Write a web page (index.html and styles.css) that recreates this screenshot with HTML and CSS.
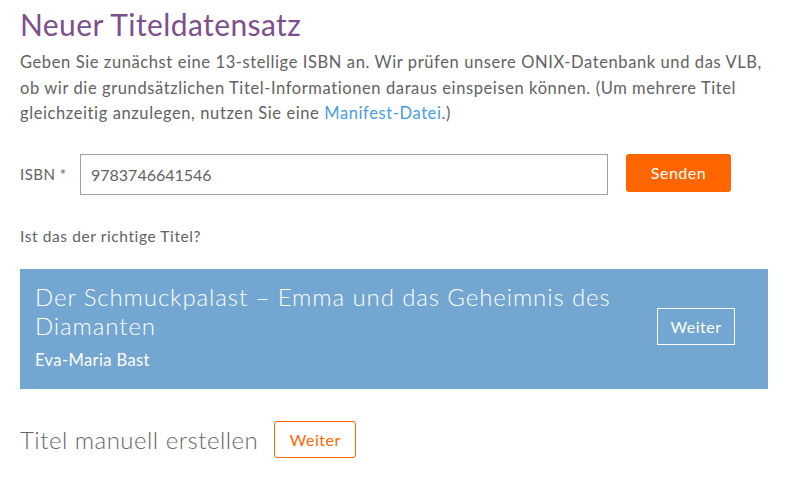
FILE: index.html
```html
<!DOCTYPE html>
<html lang="de">
<head>
    <meta charset="UTF-8">
    <meta name="viewport" content="width=device-width, initial-scale=1.0">
    <title>Neuer Titeldatensatz</title>
    <link rel="stylesheet" href="styles.css">
</head>
<body>
    <div class="container">
        <h1>Neuer Titeldatensatz</h1>
        <p class="intro">
            Geben Sie zunächst eine 13-stellige ISBN an. Wir prüfen unsere ONIX-Datenbank und das VLB,
            ob wir die grundsätzlichen Titel-Informationen daraus einspeisen können. (Um mehrere Titel
            gleichzeitig anzulegen, nutzen Sie eine <a href="#">Manifest-Datei</a>.)
        </p>

        <form class="isbn-form" onsubmit="return false">
            <label for="isbn">ISBN *</label>
            <input type="text" id="isbn" value="9783746641546">
            <button class="btn-send">Senden</button>
        </form>

        <p class="question">Ist das der richtige Titel?</p>

        <!-- Treffer aus der Datenbank -->
        <div class="result">
            <div class="result-info">
                <h2>Der Schmuckpalast – Emma und das Geheimnis des Diamanten</h2>
                <div class="author">Eva-Maria Bast</div>
            </div>
            <button class="btn-light">Weiter</button>
        </div>

        <div class="manual">
            <h2>Titel manuell erstellen</h2>
            <button class="btn-outline">Weiter</button>
        </div>
    </div>
</body>
</html>
```

FILE: styles.css
```css
body {
    font-family: Lato, "Open Sans", sans-serif;
    color: #626262;
    background: #ffffff;
    margin: 0;
}
.container {
    width: 748px;
    padding: 0 20px;
}
h1 {
    font-size: 30px;
    font-weight: 400;
    letter-spacing: 0.4px;
    color: #7d4f8e;
    margin: 6px 0 8px;
    line-height: 36px;
}
.intro {
    font-size: 16.5px;
    letter-spacing: 0.6px;
    line-height: 25.5px;
    margin: 0 0 27px;
}
.intro a {
    color: #4a9de0;
    text-decoration: none;
}
.isbn-form {
    display: flex;
    align-items: flex-start;
}
.isbn-form label {
    font-size: 15px;
    letter-spacing: 0.5px;
    line-height: 41px;
    width: 60px;
}
.isbn-form input {
    width: 528px;
    height: 41px;
    box-sizing: border-box;
    border: 1px solid #a0a0a0;
    padding: 0 10px;
    font-family: inherit;
    font-size: 16px;
    color: #626262;
    margin: 0;
}
.btn-send {
    margin-left: 18px;
    width: 105px;
    height: 38px;
    background: #ff6600;
    color: #ffffff;
    border: none;
    border-radius: 3px;
    font-family: inherit;
    font-size: 16px;
    letter-spacing: 0.5px;
    cursor: pointer;
}
.question {
    font-size: 15.5px;
    letter-spacing: 0.6px;
    margin: 30px 0 22px;
    line-height: 22px;
}
.result {
    background: #73a6d1;
    color: #ffffff;
    display: flex;
    align-items: center;
    padding: 13px 33px 18px 15px;
}
.result-info {
    flex: 1;
}
.result h2 {
    font-size: 24px;
    font-weight: 300;
    letter-spacing: 0.9px;
    line-height: 29px;
    margin: 0 0 9px;
    max-width: 600px;
}
.author {
    font-size: 16.5px;
    letter-spacing: 0.4px;
    line-height: 22px;
}
.btn-light {
    background: transparent;
    border: 1px solid #ffffff;
    color: #ffffff;
    width: 78px;
    height: 37px;
    font-family: inherit;
    font-size: 16px;
    letter-spacing: 0.5px;
    cursor: pointer;
}
.manual {
    display: flex;
    align-items: center;
    margin-top: 32px;
}
.manual h2 {
    font-size: 24px;
    font-weight: 300;
    letter-spacing: 0.5px;
    margin: 0 16px 0 0;
    color: #666666;
}
.btn-outline {
    background: #ffffff;
    border: 1px solid #ff6600;
    border-radius: 3px;
    color: #ff6600;
    width: 82px;
    height: 37px;
    font-family: inherit;
    font-size: 16px;
    letter-spacing: 0.5px;
    cursor: pointer;
}
```
